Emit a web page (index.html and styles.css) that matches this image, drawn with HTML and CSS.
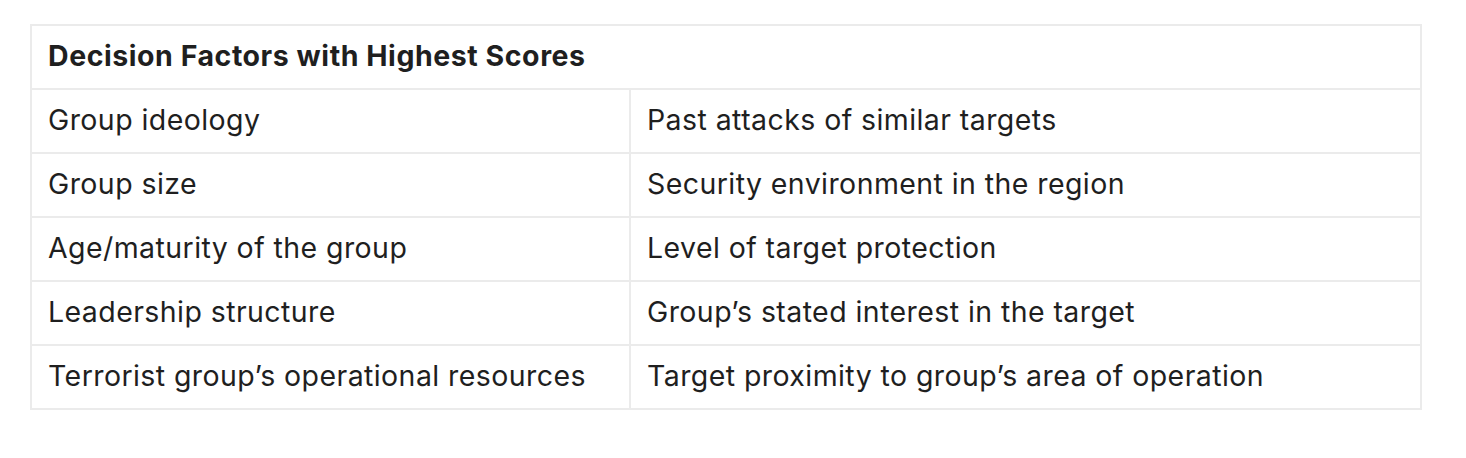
FILE: index.html
```html
<!DOCTYPE html>
<html lang="en">
<head>
<meta charset="utf-8">
<title>Decision Factors</title>
<link rel="stylesheet" href="styles.css">
</head>
<body>
<div class="wrap">
<table class="factors">
  <colgroup><col class="col-a"><col class="col-b"></colgroup>
  <thead>
    <tr><th colspan="2">Decision Factors with Highest Scores</th></tr>
  </thead>
  <tbody>
    <tr><td>Group ideology</td><td>Past attacks of similar targets</td></tr>
    <tr><td>Group size</td><td>Security environment in the region</td></tr>
    <tr><td>Age/maturity of the group</td><td>Level of target protection</td></tr>
    <tr><td>Leadership structure</td><td>Group’s stated interest in the target</td></tr>
    <tr><td>Terrorist group’s operational resources</td><td>Target proximity to group’s area of operation</td></tr>
  </tbody>
</table>
</div>
</body>
</html>
```
FILE: styles.css
```css
html, body {
  margin: 0;
  padding: 0;
  background: #ffffff;
}
body {
  font-family: "Inter", "Liberation Sans", sans-serif;
  color: #1f1f1f;
}
.wrap {
  padding: 24px 0 0 30px;
}
.factors {
  border-collapse: collapse;
  table-layout: fixed;
  width: 1392px;
  border: 2px solid #ebebeb;
}
.col-a { width: 599px; }
.factors th,
.factors td {
  border: 2px solid #ebebeb;
  height: 64px;
  padding: 0 16px 2px;
  box-sizing: border-box;
  text-align: left;
  vertical-align: middle;
  font-size: 28.5px;
  line-height: 34px;
}
.factors th {
  font-weight: 700;
  letter-spacing: 0.55px;
}
.factors td {
  font-weight: 400;
  letter-spacing: 0.42px;
}
```
